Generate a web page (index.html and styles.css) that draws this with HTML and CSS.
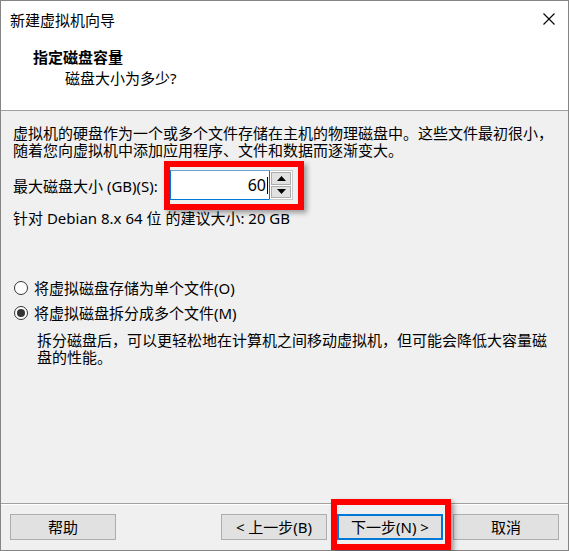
FILE: index.html
```html
<!DOCTYPE html>
<html lang="zh-CN">
<head>
<meta charset="utf-8">
<title>新建虚拟机向导</title>
<link rel="stylesheet" href="styles.css">
</head>
<body>
<div class="window">
  <div class="top">
    <div class="titlebar">
      <span class="title">新建虚拟机向导</span>
      <svg class="close" width="12" height="12" viewBox="0 0 12 12"><path d="M0.5 0.5 L11.5 11.5 M11.5 0.5 L0.5 11.5" stroke="#000" stroke-width="1.1" fill="none"/></svg>
    </div>
    <div class="header">
      <div class="heading">指定磁盘容量</div>
      <div class="subheading">磁盘大小为多少?</div>
    </div>
  </div>
  <div class="content">
    <p class="para">虚拟机的硬盘作为一个或多个文件存储在主机的物理磁盘中。这些文件最初很小，<br>随着您向虚拟机中添加应用程序、文件和数据而逐渐变大。</p>
    <div class="size-row">
      <span class="size-label">最大磁盘大小 (GB)(S):</span>
      <div class="spin-field">
        <div class="field"><span class="value">60</span><span class="caret"></span></div>
        <div class="spinner">
          <div class="spin-btn"><svg width="9" height="5" viewBox="0 0 9 5"><path d="M4.5 0 L9 5 L0 5 Z" fill="#000"/></svg></div>
          <div class="spin-btn"><svg width="9" height="5" viewBox="0 0 9 5"><path d="M0 0 L9 0 L4.5 5 Z" fill="#000"/></svg></div>
        </div>
      </div>
    </div>
    <div class="recommend">针对 Debian 8.x 64 位 的建议大小: 20 GB</div>
    <label class="radio-row first"><span class="radio"></span><span>将虚拟磁盘存储为单个文件(O)</span></label>
    <label class="radio-row second"><span class="radio checked"></span><span>将虚拟磁盘拆分成多个文件(M)</span></label>
    <p class="desc">拆分磁盘后，可以更轻松地在计算机之间移动虚拟机，但可能会降低大容量磁<br>盘的性能。</p>
  </div>
  <div class="footer">
    <button class="btn">帮助</button>
    <div class="spacer"></div>
    <button class="btn">&lt; 上一步(B)</button>
    <button class="btn default">下一步(N) &gt;</button>
    <button class="btn">取消</button>
  </div>
  <div class="mark mark-size"></div>
  <div class="mark mark-next"></div>
</div>
</body>
</html>
```

FILE: styles.css
```css
* { box-sizing: border-box; }
html, body { margin: 0; padding: 0; background: #ffffff; }
body {
  font-family: "Noto Sans", "Noto Sans CJK SC", sans-serif;
  font-size: 15px;
  color: #000;
}
.window {
  position: relative;
  width: 569px;
  height: 551px;
  border: 1px solid #858585;
  display: flex;
  flex-direction: column;
  background: #f0f0f0;
}
.top {
  background: #ffffff;
  height: 110px;
  flex: none;
  border-bottom: 1px solid #a0a0a0;
}
.titlebar {
  height: 38px;
  display: flex;
  justify-content: space-between;
  align-items: flex-start;
  padding: 9px 13px 0 9px;
}
.title { line-height: 20px; }
.close { margin-top: 3px; display: block; }
.header { padding: 8px 0 0 32px; }
.heading { font-weight: bold; line-height: 20px; }
.subheading { line-height: 20px; padding-left: 32px; margin-top: 1px; }
.content {
  flex: 1;
  padding: 14px 12px 0 12px;
  white-space: nowrap;
}
.para { margin: 0; line-height: 17px; }
.size-row {
  margin-top: 11px;
  display: flex;
  align-items: center;
  height: 30px;
}
.size-label { width: 157px; flex: none; }
.spin-field { display: flex; height: 30px; }
.field {
  width: 99px;
  height: 30px;
  border: 1px solid #0078d7;
  border-top-color: #6fa3d8;
  border-right: none;
  background: #fff;
  display: flex;
  align-items: center;
  justify-content: flex-end;
  padding-right: 1px;
}
.value { font-size: 16px; line-height: 20px; }
.caret { width: 1px; height: 17px; background: #000; margin-left: 1px; }
.spinner {
  width: 24px;
  height: 30px;
  border: 1px solid #c8c8c8;
  border-left: 1px solid #0078d7;
  background: #fff;
  padding: 1px;
  display: flex;
  flex-direction: column;
  gap: 1px;
}
.spin-btn {
  flex: 1;
  background: #e1e1e1;
  border: 1px solid #adadad;
  display: flex;
  align-items: center;
  justify-content: center;
}
.spin-btn svg { display: block; }
.recommend { margin-top: 10px; line-height: 17px; }
.radio-row {
  display: flex;
  align-items: center;
  height: 17px;
  gap: 6px;
}
.radio-row.first { margin-top: 52px; }
.radio-row.second { margin-top: 8px; }
.radio {
  width: 14px;
  height: 14px;
  border: 1px solid #333;
  border-radius: 50%;
  background: #fff;
  flex: none;
  display: flex;
  align-items: center;
  justify-content: center;
  margin-left: 1px;
}
.radio.checked::after {
  content: "";
  width: 8px;
  height: 8px;
  border-radius: 50%;
  background: #333;
}
.desc { margin: 11px 0 0 24px; line-height: 17px; }
.footer {
  height: 47px;
  flex: none;
  border-top: 1px solid #a0a0a0;
  box-shadow: inset 0 1px 0 #ffffff;
  display: flex;
  align-items: flex-start;
  gap: 10px;
  padding: 10px 9px 0 9px;
}
.spacer { flex: 1; }
.btn {
  width: 106px;
  height: 26px;
  background: #e1e1e1;
  border: 1px solid #adadad;
  font-family: inherit;
  font-size: 15px;
  color: #000;
  padding: 0;
  line-height: 20px;
}
.btn.default { border: 2px solid #0078d7; }
.mark {
  position: absolute;
  border: 6px solid #ff0000;
  box-shadow: 3px 3px 5px rgba(0,0,0,0.35);
  pointer-events: none;
}
.mark-size { left: 163px; top: 160px; width: 140px; height: 49px; }
.mark-next { left: 330px; top: 498px; width: 120px; height: 51px; }
```
